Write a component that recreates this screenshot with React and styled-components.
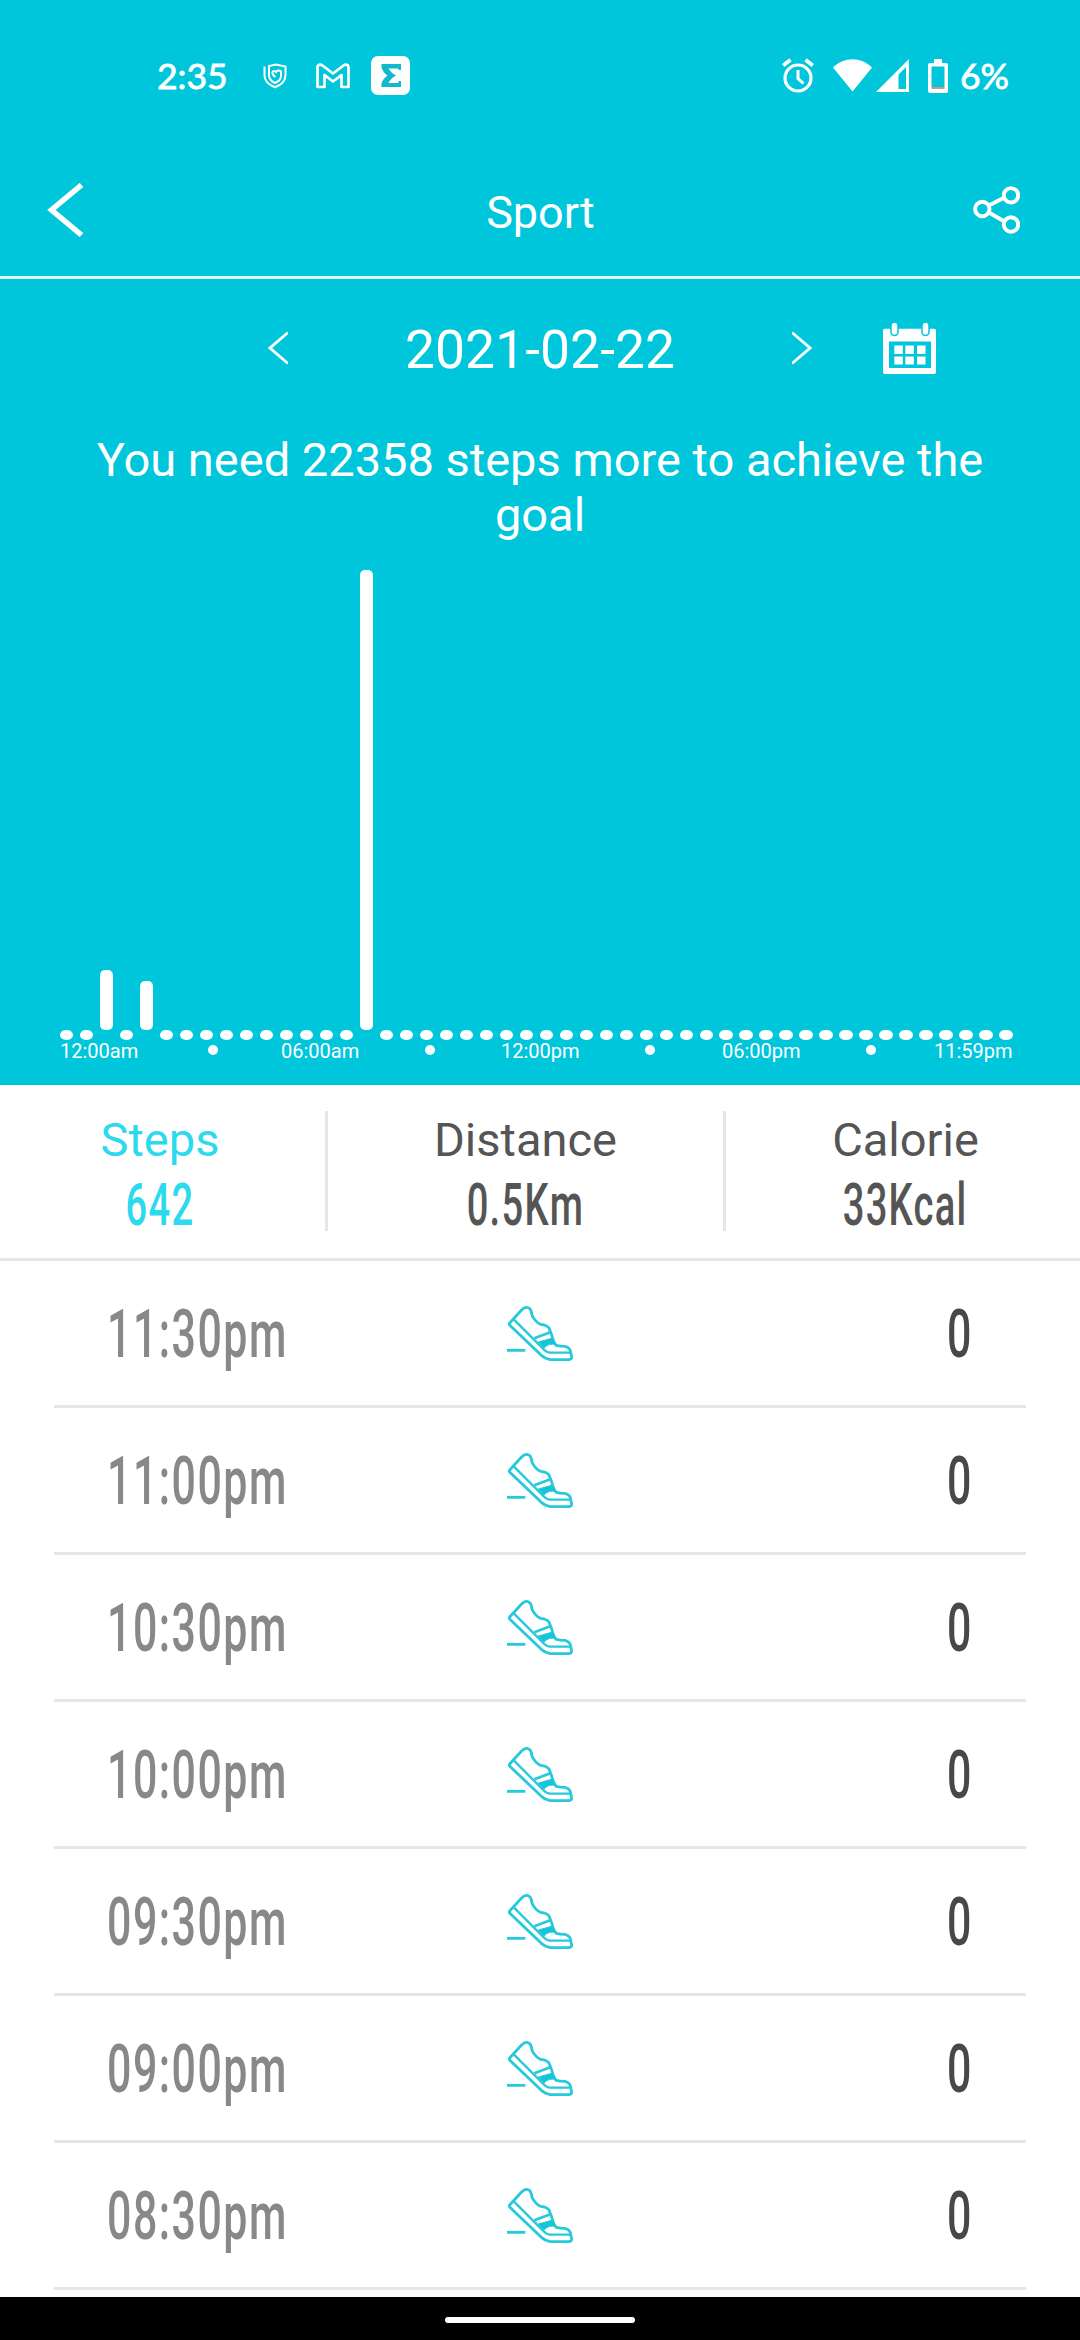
import styled, { createGlobalStyle } from 'styled-components';

const GlobalStyle = createGlobalStyle`
  * {
    box-sizing: border-box;
  }

  body {
    margin: 0;
    background: #fff;
    font-family: Roboto, "Liberation Sans", sans-serif;
  }

  svg {
    display: block;
    flex-shrink: 0;
  }
`;

const Screen = styled.div`
  display: flex;
  flex-direction: column;
  width: 1080px;
  height: 2340px;
  overflow: hidden;
  background: #fff;
`;

const TopPanel = styled.section`
  height: 1085px;
  color: #fff;
  background: #00c6dc;
`;

const StatusBar = styled.div`
  display: flex;
  align-items: center;
  justify-content: space-between;
  height: 144px;
  padding: 7px 71px 0 157px;
`;

const StatusGroup = styled.div`
  display: flex;
  align-items: center;
`;

const StatusText = styled.span`
  font-family: Lato, "Open Sans", sans-serif;
  font-size: 35.5px;
  font-weight: 400;
  line-height: 40px;
  -webkit-text-stroke: 0.8px #fff;
`;

const Clock = styled(StatusText)`
  width: 106px;
`;

const Header = styled.header`
  display: flex;
  align-items: center;
  justify-content: space-between;
  height: 135px;
  padding: 0 60px 0 47px;
  border-bottom: 3px solid #dffafc;
`;

const Title = styled.h1`
  margin: 0 0 0 23px;
  padding-top: 5px;
  font-size: 45px;
  font-weight: 400;
`;

const DateRow = styled.div`
  display: flex;
  align-items: center;
  height: 138px;
  padding-left: 268px;
`;

const DateText = styled.div`
  width: 504px;
  padding-top: 3px;
  font-size: 53.5px;
  text-align: center;
`;

const CalendarButton = styled.div`
  margin-left: 71px;
`;

const Goal = styled.p`
  height: 153px;
  margin: 0;
  padding: 15px 80px 0;
  font-size: 47px;
  line-height: 55.3px;
  text-align: center;
`;

const Bars = styled.div`
  display: flex;
  align-items: flex-end;
  gap: 6.67px;
  height: 470px;
  padding: 0 60px;
`;

const Bar = styled.div`
  flex: none;
  width: 13.33px;
  height: ${(props) => (props.$height ? props.$height : 10)}px;
  margin-bottom: ${(props) => (props.$height ? 10 : 0)}px;
  border-radius: ${(props) => (props.$height ? '5px' : '6px / 5px')};
  background: #fff;
`;

const Axis = styled.div`
  display: grid;
  grid-template-columns: 148px 73px 144px 76px 144px 77px 144px 68px 78px;
  align-items: center;
  height: 22px;
  margin-left: 60px;
  font-size: 20px;
  line-height: 22px;
`;

const AxisDot = styled.i`
  width: 10px;
  height: 10px;
  margin-bottom: 2px;
  border-radius: 50%;
  background: #fff;
`;

const Stats = styled.section`
  display: flex;
  align-items: center;
  height: 176px;
  padding-bottom: 1px;
  border-bottom: 3px solid #e6e6e6;
`;

const Stat = styled.div`
  display: flex;
  flex-direction: column;
  align-items: center;
  gap: 5px;
  width: ${(props) => props.$width}px;
  padding-top: 7px;
  color: ${(props) => (props.$active ? '#2cd9ed' : '#555')};
`;

const StatDivider = styled.div`
  width: 3px;
  height: 120px;
  margin-left: ${(props) => props.$left || 0}px;
  margin-right: ${(props) => props.$right || 0}px;
  background: #e6e6e6;
`;

const StatLabel = styled.div`
  font-size: 47px;
  line-height: 56px;
`;

// narrow digits, squeezed horizontally
const Narrow = styled.span`
  display: inline-block;
  font-weight: 500;
  letter-spacing: 0.035em;
  white-space: nowrap;
  transform: scaleX(0.65);
  transform-origin: ${(props) => props.$origin || 'center'};
`;

const StatValue = styled(Narrow)`
  font-size: 58.6px;
  line-height: 64px;
`;

const List = styled.ul`
  flex: 1;
  margin: 0;
  padding: 0 54px;
  list-style: none;
`;

const Row = styled.li`
  display: grid;
  grid-template-columns: 1fr 66px 1fr;
  align-items: center;
  height: 147px;
  padding: 0 53px;
  border-bottom: 3px solid #e6e6e6;
`;

const Time = styled(Narrow)`
  padding-top: 3px;
  font-size: 66px;
  color: #888;
`;

const Count = styled(Narrow)`
  padding-top: 3px;
  font-size: 66px;
  text-align: right;
  color: #484848;
`;

const NavBar = styled.div`
  display: flex;
  align-items: center;
  justify-content: center;
  height: 43px;
  padding-top: 3px;
  background: #000;
`;

const NavPill = styled.div`
  width: 190px;
  height: 6px;
  border-radius: 3px;
  background: #fff;
`;

const Gap = styled.div`
  width: ${(props) => props.$size}px;
`;

const ShieldIcon = () => (
  <svg width="24" height="26" viewBox="0 0 24 26" fill="none" stroke="#fff" strokeWidth="2">
    <path d="M1.500 3.500v9c0 6 5 9.500 10.500 11.800C18 22 22.500 18.500 22.500 12V3.500L13 1.500 6 3v9.500c0 4 3 6 6 7.500 3.500-1.500 6-4 6-7V8.500c-1.500-1.500-4-1.500-5 .5-1-1.500-3-1.500-3.500 0-.5 2 1.500 4 3 5" />
  </svg>
);

const MailIcon = () => (
  <svg width="34" height="26" viewBox="0 0 34 26" fill="none" stroke="#fff" strokeWidth="2.700" strokeLinejoin="round">
    <path d="M1.500 24V4.500C1.500 1.500 4.500.8 6.500 2.500L17 10.500 27.500 2.500C29.500.8 32.500 1.500 32.500 4.500V24H25.500V12L17 18.500 8.500 12V24Z" />
  </svg>
);

const SigmaIcon = () => (
  <svg width="39" height="39" viewBox="0 0 39 39">
    <rect width="39" height="39" rx="7" fill="#fff" />
    <path d="M10.500 8H30V14H28L27 12.500H17.500Q20 17 25 19.500Q20 22 17.500 27H27L28 25H30V31H10.500V27.500Q12 22.500 16.500 19.500Q12 16.500 10.500 11.500Z" fill="#12b9cd" />
  </svg>
);

const AlarmIcon = () => (
  <svg width="32" height="35" viewBox="0 0 32 35" fill="none" stroke="#fff">
    <circle cx="16" cy="20" r="13" strokeWidth="3.200" />
    <path d="M16 12v8.500l5.500 5" strokeWidth="3" />
    <path d="M1.200 7.500 8.500 1.700M30.800 7.500 23.500 1.700" strokeWidth="3.800" />
  </svg>
);

const WifiIcon = () => (
  <svg width="39" height="33" viewBox="0 0 39 33">
    <path d="M0 8.500C11-2.500 28-2.500 39 8.500L19.500 32.500Z" fill="#fff" />
  </svg>
);

const SignalIcon = () => (
  <svg width="33" height="33" viewBox="0 0 33 33">
    <path d="M33 0V33H0ZM30 8 22.500 15.500V30H30Z" fill="#fff" fillRule="evenodd" />
  </svg>
);

const BatteryIcon = () => (
  <svg width="20" height="34" viewBox="0 0 20 34">
    <path d="M6 0h8v4h4q2 0 2 2v26q0 2-2 2H2q-2 0-2-2V6q0-2 2-2h4ZM3.500 7.500v21h13v-21Z" fill="#fff" fillRule="evenodd" />
    <path d="M3.500 29h13" stroke="#d98b7c" strokeWidth="1.800" />
  </svg>
);

const BackIcon = () => (
  <svg width="38" height="54" viewBox="0 0 38 54" fill="none" stroke="#fff" strokeWidth="5.500">
    <path d="M34.500 2 4.500 27 34.500 52" />
  </svg>
);

const ShareIcon = () => (
  <svg width="47" height="48" viewBox="0 0 47 48" fill="none" stroke="#fff" strokeWidth="3.900">
    <circle cx="9.300" cy="23" r="7.200" />
    <circle cx="38" cy="9.300" r="7.200" />
    <circle cx="38" cy="38.500" r="7.200" />
    <path d="M15.800 19.500 31.500 11.500M15.800 26.500 31.500 35.500" />
  </svg>
);

const ArrowIcon = ({ next }) => (
  <svg width="20" height="34" viewBox="0 0 20 34" fill="none" stroke="#fff" strokeWidth="2.800">
    <path d={next ? 'M0 1.500 18 17 0 32.500' : 'M20 1.500 2 17 20 32.500'} />
  </svg>
);

const CalendarIcon = () => (
  <svg width="53" height="51" viewBox="0 0 53 51" fill="#fff">
    <path d="M2 5.700H51Q53 5.700 53 7.700V49Q53 51 51 51H2Q0 51 0 49V7.700Q0 5.700 2 5.700ZM6 18.500V45H48V18.500Z" fillRule="evenodd" />
    <rect x="8" y="-1" width="7" height="13.500" rx="3.500" stroke="#00c6dc" strokeWidth="1.500" />
    <rect x="39" y="-1" width="7" height="13.500" rx="3.500" stroke="#00c6dc" strokeWidth="1.500" />
    {[11.3, 22.3, 34].map((x) => (
      <g key={x}>
        <rect x={x} y="22.500" width="8.500" height="8.500" />
        <rect x={x} y="33.500" width="8.500" height="8" />
      </g>
    ))}
  </svg>
);

const ShoeIcon = () => (
  <svg width="66" height="55" viewBox="82 75 198 165" fill="none" stroke="#27c9da" strokeWidth="8.500" strokeLinejoin="round">
    <path d="M90 126 125 88Q140 72 152 85Q156 92 157 103Q168 124 183 130Q202 132 208 141L216 162Q222 186 230 193Q240 196 256 196Q273 200 274 218L276 229Q276 236 266 236H212Q196 233 185 223L92 134Q87 130 90 126Z" />
    <path d="M103 116 190 203Q200 214 212 215H273" strokeWidth="7" />
    <path d="M164 172 212 154" strokeWidth="8" />
    <path d="M176 183 219 171 228 191Q208 185 193 201Z" fill="#14c5d8" strokeWidth="3" />
    <path d="M82 208H137" />
  </svg>
);

const steps = Array.from({ length: 48 }, () => 0);
steps[2] = 60;
steps[4] = 49;
steps[15] = 460;

const times = ['11:30pm', '11:00pm', '10:30pm', '10:00pm', '09:30pm', '09:00pm', '08:30pm'];

const App = () => {
  return (
    <Screen>
      <GlobalStyle />
      <TopPanel>
        <StatusBar>
          <StatusGroup>
            <Clock>2:35</Clock>
            <ShieldIcon />
            <Gap $size={29} />
            <MailIcon />
            <Gap $size={21} />
            <SigmaIcon />
          </StatusGroup>
          <StatusGroup>
            <AlarmIcon />
            <Gap $size={19} />
            <WifiIcon />
            <Gap $size={4} />
            <SignalIcon />
            <Gap $size={19} />
            <BatteryIcon />
            <Gap $size={12} />
            <StatusText>6%</StatusText>
          </StatusGroup>
        </StatusBar>
        <Header>
          <BackIcon />
          <Title>Sport</Title>
          <ShareIcon />
        </Header>
        <DateRow>
          <ArrowIcon />
          <DateText>2021-02-22</DateText>
          <ArrowIcon next />
          <CalendarButton>
            <CalendarIcon />
          </CalendarButton>
        </DateRow>
        <Goal>You need 22358 steps more to achieve the goal</Goal>
        <Bars>
          {steps.map((height, i) => (
            <Bar key={i} $height={height} />
          ))}
        </Bars>
        <Axis>
          <span>12:00am</span>
          <AxisDot />
          <span>06:00am</span>
          <AxisDot />
          <span>12:00pm</span>
          <AxisDot />
          <span>06:00pm</span>
          <AxisDot />
          <span>11:59pm</span>
        </Axis>
      </TopPanel>
      <Stats>
        <Stat $width={320} $active>
          <StatLabel>Steps</StatLabel>
          <StatValue>642</StatValue>
        </Stat>
        <StatDivider $left={5} />
        <Stat $width={395}>
          <StatLabel>Distance</StatLabel>
          <StatValue>0.5Km</StatValue>
        </Stat>
        <StatDivider $right={5} />
        <Stat $width={349}>
          <StatLabel>Calorie</StatLabel>
          <StatValue>33Kcal</StatValue>
        </Stat>
      </Stats>
      <List>
        {times.map((time) => (
          <Row key={time}>
            <Time $origin="left">{time}</Time>
            <ShoeIcon />
            <Count $origin="right">0</Count>
          </Row>
        ))}
      </List>
      <NavBar>
        <NavPill />
      </NavBar>
    </Screen>
  );
};

export default App;
